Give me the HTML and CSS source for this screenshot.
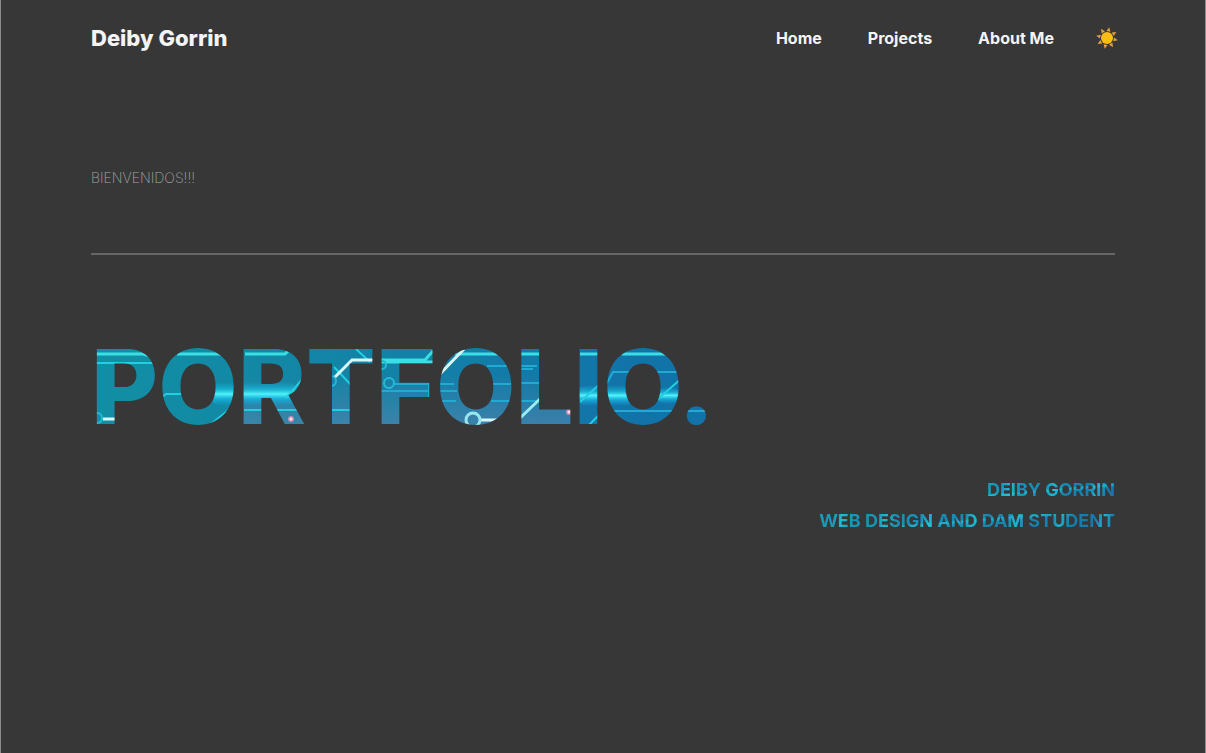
FILE: index.html
```html
<!DOCTYPE html>
<html lang="es">
<head>
<meta charset="utf-8">
<meta name="viewport" content="width=device-width, initial-scale=1">
<title>Deiby Gorrin</title>
<link rel="stylesheet" href="styles.css">
</head>
<body>
<div class="page">
  <header class="header">
    <a class="brand" href="#">Deiby Gorrin</a>
    <nav class="nav">
      <a class="nav-link" href="#">Home</a>
      <a class="nav-link" href="#projects">Projects</a>
      <a class="nav-link" href="#about">About Me</a>
      <button class="theme" type="button" aria-label="Light theme">
        <svg class="sun" viewBox="1 1 22 22" aria-hidden="true">
          <g fill="#e0a040" transform="rotate(12 12 12)">
            <path id="ray" d="M10 5.200 12 1l2 4.200z"/>
            <use href="#ray" transform="rotate(45 12 12)"/>
            <use href="#ray" transform="rotate(90 12 12)"/>
            <use href="#ray" transform="rotate(135 12 12)"/>
            <use href="#ray" transform="rotate(180 12 12)"/>
            <use href="#ray" transform="rotate(225 12 12)"/>
            <use href="#ray" transform="rotate(270 12 12)"/>
            <use href="#ray" transform="rotate(315 12 12)"/>
          </g>
          <circle cx="12" cy="12" r="6" fill="#fcbc14"/>
        </svg>
      </button>
    </nav>
  </header>
  <main>
    <p class="welcome">BIENVENIDOS!!!</p>
    <hr class="rule">
    <h1 class="title">PORTFOLIO.</h1>
    <div class="credits">
      <p class="credit">DEIBY GORRIN</p>
      <p class="credit">WEB DESIGN AND DAM STUDENT</p>
    </div>
  </main>
</div>
</body>
</html>
```
FILE: styles.css
```css
* { box-sizing: border-box; }

body {
  margin: 0;
  background: #373737;
  color: #f4f4f4;
  font-family: Inter, "Liberation Sans", sans-serif;
}

.page {
  min-height: 100vh;
  padding: 0 90px;
  border: solid #8c8c8c;
  border-width: 0 1px;
}

.header {
  display: flex;
  align-items: center;
  justify-content: space-between;
  height: 76px;
}

.brand,
.nav-link {
  color: inherit;
  text-decoration: none;
}

.brand {
  font-size: 22px;
  font-weight: 800;
}

.nav {
  display: flex;
  align-items: center;
  gap: 46px;
  margin-right: -3px;
}

.nav-link {
  font-size: 16px;
  font-weight: 700;
}

.theme {
  display: flex;
  margin-left: -4px;
  padding: 0;
  border: 0;
  background: none;
  cursor: pointer;
}

.sun {
  width: 22px;
  height: 22px;
}

.welcome {
  margin: 90px 0 0;
  color: #a4a4a4;
  font-size: 14px;
  font-weight: 200;
  line-height: 24px;
}

.rule {
  height: 2px;
  margin: 63px 0 0;
  border: 0;
  background: #666;
}

.title {
  margin: 72px 0 0;
  font-size: 103px;
  font-weight: 800;
  line-height: 120px;
  color: transparent;
  background: #1273a8 url("data:image/svg+xml,%3Csvg xmlns='http://www.w3.org/2000/svg' viewBox='91 327 720 120'%3E%3Cdefs%3E%3ClinearGradient id='a'%3E%3Cstop stop-color='%23128fa4'/%3E%3Cstop offset='.2' stop-color='%231289a5'/%3E%3Cstop offset='.5' stop-color='%23137fa8'/%3E%3Cstop offset='.75' stop-color='%231273a8'/%3E%3C/linearGradient%3E%3ClinearGradient id='b' x2='0' y2='1'%3E%3Cstop offset='.4' stop-color='%235080a8' stop-opacity='0'/%3E%3Cstop offset='.9' stop-color='%234b84ac' stop-opacity='.85'/%3E%3C/linearGradient%3E%3ClinearGradient id='g' x2='0' y2='1'%3E%3Cstop stop-color='%2310b0d8' stop-opacity='0'/%3E%3Cstop offset='.3' stop-color='%2318c0e0' stop-opacity='.7'/%3E%3Cstop offset='.5' stop-color='%234ff4fa'/%3E%3Cstop offset='.7' stop-color='%2318b8e4' stop-opacity='.8'/%3E%3Cstop offset='1' stop-color='%2310a8dc' stop-opacity='0'/%3E%3C/linearGradient%3E%3C/defs%3E%3Cpath fill='url(%23a)' d='M91 327h720v120H91z'/%3E%3Cpath fill='url(%23b)' d='M240 327h332v120H240z'/%3E%3Cg fill='url(%23g)'%3E%3Cpath d='M208 394q4-12 14-12h66q8 0 10 12q-2 12-14 12h-62q-10 0-14-12z'/%3E%3Cpath d='M576 395q2-10 10-10h40q6 0 8 10q-2 11-8 11h-40q-8 0-10-11z'/%3E%3Cpath d='M655 395q4-8 10-8h9q4 2 6 8q-2 9-8 9h-8q-7-2-9-9z'/%3E%3C/g%3E%3Cg fill='none' stroke='%2320cfe0' stroke-width='3'%3E%3Cpath stroke='%233adfe4' d='M95 354h48l7 2M177 354h45M245 354h40l5-5M381 360h44l8-9M379 362h55M455 354h43M520 354h20M580 354h20M622 354h43'/%3E%3Cpath stroke-width='2' d='M95 363h60M162 397l4-3h15M211 424l20-16M286 398l20-23M244 410h66M356 349l14 13M334 367l18 19M332 410h20M580 402l20-18M589 425l12-12M658 399l25-22'/%3E%3Cpath stroke='%2322a9d4' stroke-width='2' d='M394 384h35v13M381 391h76M487 366h24M439 384h15M493 384h18M440 401h16M491 401h20M520 366h17M520 369h13M520 383h20M520 401h20M607 383l6-11h69M614 411h94'/%3E%3Cg stroke='%2325bad8' stroke-width='2'%3E%3Ccircle cx='97' cy='418' r='5'/%3E%3Ccircle cx='331' cy='381' r='5'/%3E%3Ccircle cx='382' cy='365' r='4'/%3E%3Ccircle cx='389' cy='383' r='5'/%3E%3C/g%3E%3Cpath stroke='%23d9f7fa' d='M103 419h14M335 377l17-17h22M437 377l27-28M481 420h17'/%3E%3Cpath stroke='%2399ecf0' d='M519 419l22-21'/%3E%3Ccircle cx='473' cy='420' r='7' stroke='%239ae6ee'/%3E%3C/g%3E%3Cg fill='%23c890b4'%3E%3Ccircle cx='291' cy='419' r='3'/%3E%3Ccircle cx='569' cy='412' r='3'/%3E%3C/g%3E%3Cg fill='%23ffe3e8'%3E%3Ccircle cx='291' cy='419' r='1.500'/%3E%3Ccircle cx='569' cy='412' r='1.500'/%3E%3C/g%3E%3C/svg%3E") 0 0 / 720px 120px no-repeat;
  -webkit-background-clip: text;
  background-clip: text;
}

.credits {
  display: flex;
  flex-direction: column;
  align-items: flex-end;
  gap: 7px;
  margin-top: 31px;
}

.credit {
  margin: 0;
  font-size: 18px;
  font-weight: 700;
  line-height: 24px;
  color: transparent;
  background:
    linear-gradient(175deg, transparent 46%, #28d8e488 50%, transparent 58%),
    repeating-linear-gradient(100deg, #1d8fb400 0 16px, #25d4e0a0 24px, #1d8fb400 34px 43px),
    linear-gradient(90deg, #179bb8, #1578ad);
  -webkit-background-clip: text;
  background-clip: text;
}
```
